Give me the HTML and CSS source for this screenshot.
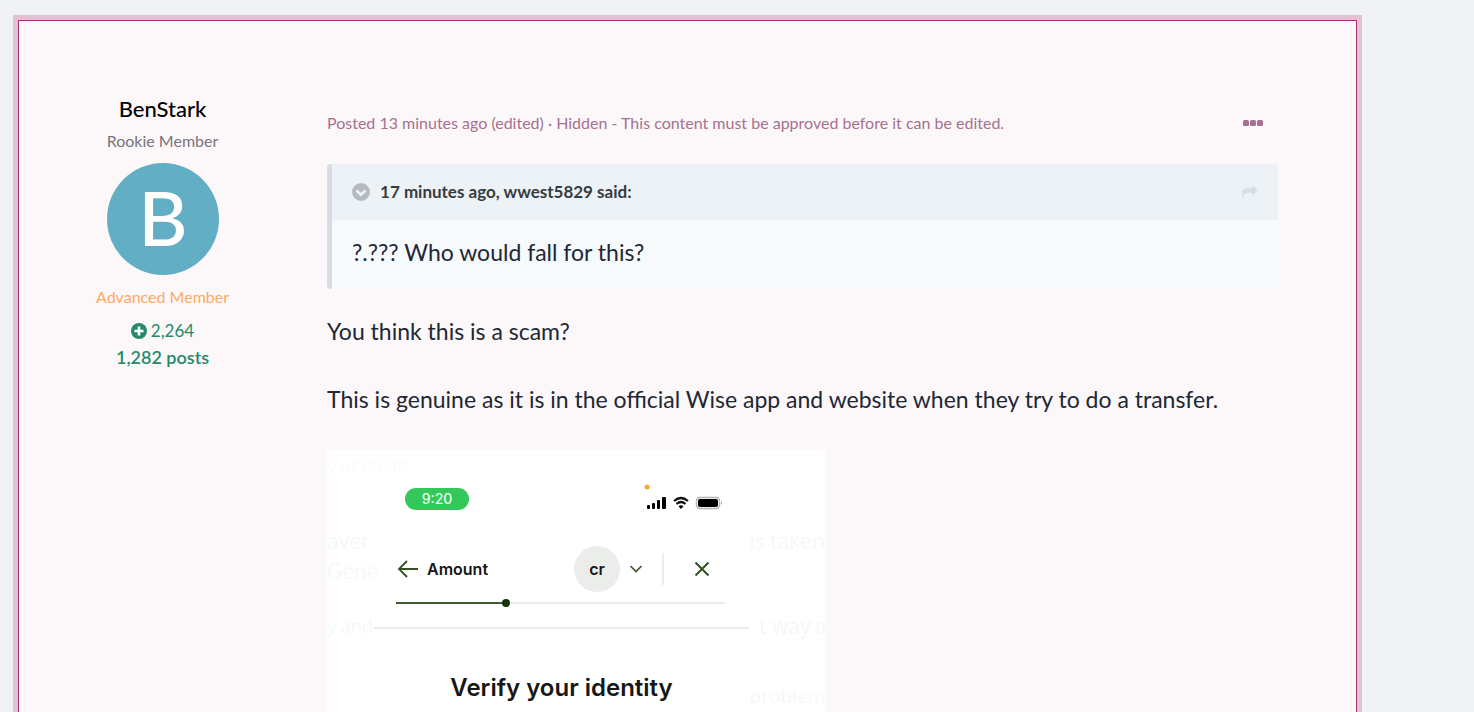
FILE: index.html
```
<!DOCTYPE html>
<html lang="en">
<head>
    <meta charset="UTF-8">
    <meta name="viewport" content="width=device-width, initial-scale=1.0">
    <title>Forum topic</title>
    <link rel="stylesheet" href="styles.css">
</head>
<body>
    <article class="post">
        <aside class="author">
            <h3 class="author-name"><a href="#">BenStark</a></h3>
            <p class="author-title">Rookie Member</p>
            <a class="avatar" href="#">
                <svg viewBox="0 0 112 112" role="img" aria-label="B">
                    <circle cx="56" cy="56" r="56" fill="#62aec5"/>
                    <text class="avatar-letter" x="56" y="83" text-anchor="middle">B</text>
                </svg>
            </a>
            <p class="author-group">Advanced Member</p>
            <p class="reputation">
                <svg width="16" height="16" viewBox="0 0 16 16" aria-hidden="true">
                    <circle cx="8" cy="8" r="8" fill="#26896c"/>
                    <path d="M8 3.5v9M3.5 8h9" stroke="#fff" stroke-width="2.6"/>
                </svg>
                <span>2,264</span>
            </p>
            <a class="post-count" href="#">1,282 posts</a>
        </aside>

        <div class="content">
            <header class="post-meta">
                <p>Posted 13 minutes ago (edited) · Hidden - This content must be approved before it can be edited.</p>
                <button class="icon-button" type="button" aria-label="More options">
                    <svg width="22" height="8" viewBox="0 0 22 8" fill="#a6708f">
                        <rect x="1" y="1" width="6" height="6" rx="1.5"/>
                        <rect x="8" y="1" width="6" height="6" rx="1.5"/>
                        <rect x="15" y="1" width="6" height="6" rx="1.5"/>
                    </svg>
                </button>
            </header>

            <blockquote class="quote">
                <div class="quote-header">
                    <button class="icon-button" type="button" aria-label="Collapse quote">
                        <svg width="18" height="18" viewBox="0 0 18 18">
                            <circle cx="9" cy="9" r="9" fill="#b6bbc0"/>
                            <path d="M4.5 7.5L9 11.700l4.500-4.200" fill="none" stroke="#edf2f6" stroke-width="2.600"/>
                        </svg>
                    </button>
                    <cite>17 minutes ago, wwest5829 said:</cite>
                    <a class="quote-link" href="#" aria-label="Go to post">
                        <svg width="18" height="16" viewBox="0 0 18 16">
                            <path d="M11 1l6 5.500-6 5.500V9H8C4 9 2.300 10.500 2 15 0 11 0 4 7 4h4z" fill="#d9dfe3"/>
                        </svg>
                    </a>
                </div>
                <p class="quote-body">?.??? Who would fall for this?</p>
            </blockquote>

            <p class="text">You think this is a scam?</p>
            <p class="text">This is genuine as it is in the official Wise app and website when they try to do a transfer.</p>

            <div class="shot">
                <div class="ghost ghost-left" aria-hidden="true">
                    <span class="ghost-date">y at 06:30</span>
                    <span>aver</span>
                    <span>Gene</span>
                    <span class="ghost-gap">y and</span>
                </div>
                <div class="phone">
                    <div class="status">
                        <span class="clock">9:20</span>
                        <svg width="78" height="28" viewBox="0 0 78 28" aria-hidden="true">
                            <circle cx="3" cy="3" r="2.500" fill="#fba52d"/>
                            <rect x="3" y="21" width="3" height="4" rx="1"/>
                            <rect x="8" y="19" width="3" height="6" rx="1"/>
                            <rect x="13" y="16" width="3" height="9" rx="1"/>
                            <rect x="18" y="13" width="4" height="12" rx="1"/>
                            <path d="M30 17q7-6 14 0M32.500 20q4.500-4 9 0" fill="none" stroke="#111" stroke-width="2.200"/>
                            <path d="M34.500 22.300q2.500-2 5 0L37 25z"/>
                            <rect x="52.500" y="13.500" width="23" height="11" rx="3.500" fill="#fff" stroke="#b5b5b5" stroke-width="1.500"/>
                            <rect x="54" y="15" width="20" height="8" rx="2"/>
                            <path d="M77 17.500q2 1.500 0 3z" fill="#999"/>
                        </svg>
                    </div>
                    <div class="toolbar">
                        <button class="icon-button" type="button" aria-label="Back">
                            <svg width="22" height="18" viewBox="0 0 22 18">
                                <path d="M21 9H2M10 1L2 9l8 8" fill="none" stroke="#35501f" stroke-width="1.800"/>
                            </svg>
                        </button>
                        <span class="step">Amount</span>
                        <span class="initials">cr</span>
                        <button class="icon-button" type="button" aria-label="Switch account">
                            <svg width="14" height="8" viewBox="0 0 14 8">
                                <path d="M1.500 1L7 6.500 12.500 1" fill="none" stroke="#3f552f" stroke-width="1.700"/>
                            </svg>
                        </button>
                        <span class="divider"></span>
                        <button class="icon-button" type="button" aria-label="Close">
                            <svg width="16" height="16" viewBox="0 0 16 16">
                                <path d="M1.500 1.500l13 13M14.500 1.500l-13 13" stroke="#35501f" stroke-width="2"/>
                            </svg>
                        </button>
                    </div>
                    <svg class="steps" viewBox="0 0 330 10" aria-hidden="true">
                        <path d="M0 5h329" stroke="#ebecec" stroke-width="2"/>
                        <path d="M0 5h110" stroke="#425b33" stroke-width="2"/>
                        <circle cx="110" cy="5" r="4" fill="#173408"/>
                    </svg>
                    <h2 class="verify">Verify your identity</h2>
                </div>
                <div class="ghost ghost-right" aria-hidden="true">
                    <span>is taken</span>
                    <span class="ghost-way">t way <small>0</small></span>
                    <span class="ghost-problem">problem</span>
                </div>
            </div>
        </div>
    </article>
</body>
</html>
```
FILE: styles.css
```
* {
    box-sizing: border-box;
}
body {
    margin: 0;
    font-family: Lato, "Open Sans", sans-serif;
    font-size: 16px;
    line-height: 24px;
    color: #212733;
    background-color: #f0f2f6;
}
h2, h3, p, blockquote {
    margin: 0;
}
a {
    color: inherit;
    text-decoration: none;
}
svg {
    display: block;
}
.icon-button {
    padding: 0;
    border: none;
    background: none;
    cursor: pointer;
}
/* Post that is waiting for approval */
.post {
    display: flex;
    gap: 98px;
    margin: 20px 117px 20px 18px;
    padding: 76px 78px 76px 77px;
    border: 1px solid #a12f70;
    background-color: #fcf8fa;
    box-shadow: 0 0 0 5px #dac5d4;
}
.author {
    display: flex;
    flex: 0 0 132px;
    flex-direction: column;
    align-items: center;
    white-space: nowrap;
}
.author-name {
    font-size: 22px;
    font-weight: 500;
    color: #000;
}
.author-title {
    margin-top: 8px;
    color: #77747a;
}
.avatar {
    width: 112px;
    margin: 10px 0;
}
.avatar-letter {
    font-size: 76px;
    font-weight: 500;
    fill: #fff;
}
.author-group {
    color: #ffaa5c;
}
.reputation {
    display: flex;
    align-items: center;
    gap: 4px;
    margin-top: 10px;
    font-size: 17px;
    color: #26896c;
}
.post-count {
    margin-top: 2px;
    font-size: 18px;
    font-weight: 600;
    color: #26896c;
}
.content {
    flex: 1;
    min-width: 0;
}
.post-meta {
    display: flex;
    justify-content: space-between;
    align-items: center;
    padding: 14px 14px 29px 0;
    color: #a6708f;
}
/* Quote */
.quote {
    margin-bottom: 25px;
    border-left: 5px solid #d8dce1;
    border-radius: 4px;
    background-color: #f6fafd;
}
.quote-header {
    display: flex;
    align-items: center;
    gap: 10px;
    padding: 16px 19px 16px 20px;
    border-radius: 0 4px 0 0;
    font-size: 17px;
    font-weight: bold;
    color: #353c41;
    background-color: #edf2f6;
}
.quote-header cite {
    font-style: normal;
}
.quote-link {
    margin-left: auto;
}
.quote-body {
    padding: 15px 20px 20px;
    font-size: 23px;
    line-height: 34px;
}
.text {
    margin-bottom: 34px;
    font-size: 23px;
    line-height: 34px;
}
/* Attached screenshot */
.shot {
    display: grid;
    grid-template-columns: 47px 375px 76px;
    width: 498px;
    max-width: 100%;
    overflow: hidden;
    font-family: Inter, sans-serif;
    color: #171717;
    background-color: #fff;
}
.ghost {
    display: flex;
    flex-direction: column;
    font-family: "Open Sans", sans-serif;
    font-size: 21px;
    line-height: 30px;
    color: #f6f7f7;
    white-space: nowrap;
}
.ghost-left {
    padding-top: 6px;
}
.ghost-date {
    margin-bottom: 50px;
    font-size: 18px;
    line-height: 20px;
    color: #fbfbfb;
}
.ghost-gap {
    margin-top: 25px;
    font-size: 18px;
}
.ghost-right {
    align-items: flex-end;
    padding-top: 76px;
}
.ghost-way {
    margin-top: 55px;
}
.ghost-way small {
    font-size: 16px;
}
.ghost-problem {
    margin-top: 38px;
    font-size: 19px;
}
.phone {
    padding-bottom: 80px;
}
.status {
    display: flex;
    justify-content: space-between;
    align-items: flex-start;
    padding: 34px 27px 0 31px;
}
.clock {
    width: 64px;
    margin-top: 4px;
    border-radius: 11px;
    font-size: 14px;
    font-weight: 500;
    line-height: 22px;
    text-align: center;
    color: #e7ffed;
    background-color: #34c759;
}
.toolbar {
    display: flex;
    align-items: center;
    padding: 34px 39px 0 23px;
}
.step {
    margin-left: 8px;
    font-size: 16px;
    font-weight: 600;
}
.initials {
    width: 46px;
    margin: 0 9px 0 auto;
    border-radius: 50%;
    font-size: 16px;
    font-weight: 600;
    line-height: 46px;
    text-align: center;
    background-color: #ebedeb;
}
.divider {
    width: 2px;
    height: 32px;
    margin: 0 30px 0 19px;
    background-color: #eceeec;
}
.steps {
    width: 330px;
    margin: 6px 0 19px 22px;
}
.verify {
    padding-top: 42px;
    border-top: 2px solid #ebecec;
    font-size: 24px;
    font-weight: 600;
    line-height: 34px;
    text-align: center;
}
```
